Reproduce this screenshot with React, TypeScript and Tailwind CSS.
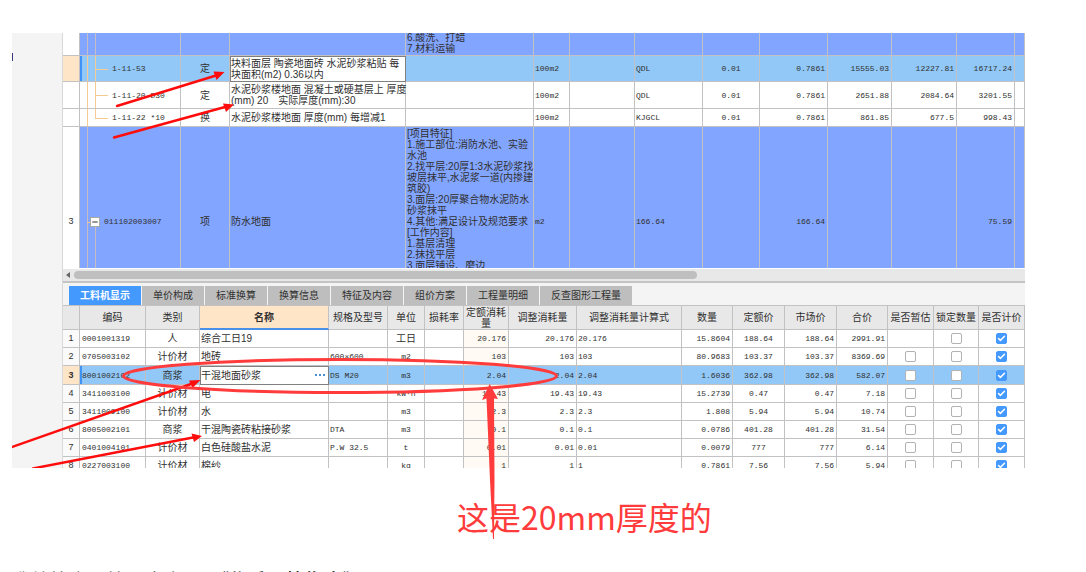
import { Fragment, type ReactNode } from "react";
import clsx from "clsx";
import { Check, Minus } from "lucide-react";

const TABS = ["工料机显示", "单价构成", "标准换算", "换算信息", "特征及内容", "组价方案", "工程量明细", "反查图形工程量"];

type QuotaRow = {
  code: string;
  kind: string;
  name: string[];
  expr: string;
  price: string;
  rate: string;
  total: string;
  height: string;
  selected?: boolean;
};

const QUOTAS: QuotaRow[] = [
  {
    code: "1-11-53",
    kind: "定",
    name: ["块料面层 陶瓷地面砖 水泥砂浆粘贴 每", "块面积(m2) 0.36以内"],
    expr: "QDL",
    price: "15555.03",
    rate: "12227.81",
    total: "16717.24",
    height: "h-[26px]",
    selected: true,
  },
  {
    code: "1-11-20 D30",
    kind: "定",
    name: ["水泥砂浆楼地面 混凝土或硬基层上 厚度", "(mm) 20　实际厚度(mm):30"],
    expr: "QDL",
    price: "2651.88",
    rate: "2084.64",
    total: "3201.55",
    height: "h-[27px]",
  },
  {
    code: "1-11-22 *10",
    kind: "换",
    name: ["水泥砂浆楼地面 厚度(mm) 每增减1"],
    expr: "KJGCL",
    price: "861.85",
    rate: "677.5",
    total: "998.43",
    height: "h-[18px]",
  },
];

const FEATURES = [
  "[项目特征]",
  "1.施工部位:消防水池、实验",
  "水池",
  "2.找平层:20厚1:3水泥砂浆找",
  "坡层抹平,水泥浆一道(内掺建",
  "筑胶)",
  "3.面层:20厚聚合物水泥防水",
  "砂浆抹平",
  "4.其他:满足设计及规范要求",
  "[工作内容]",
  "1.基层清理",
  "2.抹找平层",
  "3.面层铺设、磨边",
];

const HEADERS = [
  "", "编码", "类别", "名称", "规格及型号", "单位", "损耗率", "定额消耗量", "调整消耗量",
  "调整消耗量计算式", "数量", "定额价", "市场价", "合价", "是否暂估", "锁定数量", "是否计价",
];

// code, kind, name, spec, unit, consumption, quantity, price, total
const MATERIALS = [
  ["0001001319", "人", "综合工日19", "", "工日", "20.176", "15.8604", "188.64", "2991.91"],
  ["0705003102", "计价材", "地砖", "600×600", "m2", "103", "80.9683", "103.37", "8369.69"],
  ["8001002102", "商浆", "干混地面砂浆", "DS M20", "m3", "2.04", "1.6036", "362.98", "582.07"],
  ["3411003100", "计价材", "电", "", "kW·h", "19.43", "15.2739", "0.47", "7.18"],
  ["3411009100", "计价材", "水", "", "m3", "2.3", "1.808", "5.94", "10.74"],
  ["8005002101", "商浆", "干混陶瓷砖粘接砂浆", "DTA", "m3", "0.1", "0.0786", "401.28", "31.54"],
  ["0401004101", "计价材", "白色硅酸盐水泥", "P.W 32.5", "t", "0.01", "0.0079", "777", "6.14"],
  ["0227003100", "计价材", "棉纱", "", "kg", "1", "0.7861", "7.56", "5.94"],
];

const SELECTED = 2;

const cell = "border-r border-b border-[#c2c2c4] p-0 whitespace-nowrap";
const mono = "font-['Liberation_Mono','Noto_Sans_CJK_SC',monospace] text-[8px]";
const marker = "shadow-[inset_2px_0_0_#3f93f5]";

function Lines({ lines }: { lines: string[] }) {
  return (
    <>
      {lines.map((line, i) => (
        <Fragment key={line}>
          {i > 0 && <br />}
          {line}
        </Fragment>
      ))}
    </>
  );
}

function Tick({ label, checked }: { label: string; checked?: boolean }) {
  return (
    <label className="relative mx-auto block size-[11px]">
      <input
        type="checkbox"
        aria-label={label}
        defaultChecked={checked}
        className="peer block size-[11px] appearance-none rounded-[2px] border border-[#b2b2b2] bg-white checked:border-[#4499ff] checked:bg-[#4499ff]"
      />
      <Check
        size={9}
        strokeWidth={4}
        className="pointer-events-none absolute top-px left-px hidden text-white peer-checked:block"
      />
    </label>
  );
}

function TreeCell({ children, selected, last }: { children: ReactNode; selected?: boolean; last?: boolean }) {
  return (
    <td className={clsx(cell, mono, "relative pl-8", selected && marker)}>
      <span className="absolute inset-y-0 left-[7px] w-px bg-[#f5cb92]" />
      <span className={clsx("absolute top-0 left-[15px] w-px bg-[#f5cb92]", last ? "h-1/2" : "h-full")} />
      <span className="absolute top-1/2 left-[15px] h-px w-[13px] bg-[#f5cb92]" />
      {children}
    </td>
  );
}

function QuotaTable() {
  return (
    <div className="h-[235px] overflow-hidden">
      <table className="w-full table-fixed border-separate border-spacing-0">
        <colgroup>
          <col className="w-[17px]" />
          <col className="w-[101px]" />
          <col className="w-[49px]" />
          <col className="w-[176px]" />
          <col className="w-[128px]" />
          <col className="w-[36px]" />
          <col className="w-[65px]" />
          <col className="w-[68px]" />
          <col className="w-[57px]" />
          <col className="w-[68px]" />
          <col className="w-[64px]" />
          <col className="w-[65px]" />
          <col className="w-[58px]" />
          <col />
        </colgroup>
        <tbody>
          <tr className="h-[23px] bg-[#82a5ff]">
            <td className={clsx(cell, "bg-white")} />
            <td className={clsx(cell, "relative")}>
              <span className="absolute inset-y-0 left-[7px] w-px bg-[#c8bcc4]" />
              <span className="absolute inset-y-0 left-[15px] w-px bg-[#c8bcc4]" />
            </td>
            <td className={cell} />
            <td className={cell} />
            <td className={clsx(cell, "pl-px")}>
              <div className="flex h-[20px] flex-col justify-end">
                <p>6.酸洗、打蜡</p>
                <p>7.材料运输</p>
              </div>
            </td>
            {[...Array(9)].map((_, i) => (
              <td key={i} className={cell} />
            ))}
          </tr>
          {QUOTAS.map((row, i) => (
            <tr key={row.code} className={clsx(row.height, row.selected ? "bg-[#92c8f7]" : "bg-white")}>
              <td className={clsx(cell, row.selected && "bg-[#ffe5c8]")} />
              <TreeCell selected={row.selected} last={i === QUOTAS.length - 1}>
                {row.code}
              </TreeCell>
              <td className={clsx(cell, "text-center")}>{row.kind}</td>
              <td
                className={clsx(
                  cell,
                  "pl-px",
                  row.selected && "bg-white outline outline-1 -outline-offset-1 outline-[#808080]"
                )}
              >
                <Lines lines={row.name} />
              </td>
              <td className={cell} />
              <td className={clsx(cell, mono, "pl-px")}>100m2</td>
              <td className={cell} />
              <td className={clsx(cell, mono, "pl-px")}>{row.expr}</td>
              <td className={clsx(cell, mono, "text-center")}>0.01</td>
              <td className={clsx(cell, mono, "pr-0.5 text-right")}>0.7861</td>
              <td className={clsx(cell, mono, "pr-0.5 text-right")}>{row.price}</td>
              <td className={clsx(cell, mono, "pr-0.5 text-right")}>{row.rate}</td>
              <td className={clsx(cell, mono, "pr-0.5 text-right")}>{row.total}</td>
              <td className={cell} />
            </tr>
          ))}
          <tr className="h-[190px] bg-[#82a5ff]">
            <td className={clsx(cell, "bg-white text-center text-[9px]")}>3</td>
            <td className={clsx(cell, mono, "relative pl-6")}>
              <span className="absolute inset-y-0 left-[7px] w-px bg-[#c8bcc4]" />
              <span className="absolute top-1/2 bottom-0 left-[15px] w-px bg-[#c8bcc4]" />
              <span className="absolute top-1/2 left-[7px] h-px w-[4px] bg-[#f5cb92]" />
              <button
                aria-label="折叠"
                className="absolute top-1/2 left-[10px] flex size-[10px] -translate-y-1/2 items-center justify-center border border-[#a8a8a8] bg-white"
              >
                <Minus size={8} strokeWidth={3} />
              </button>
              011102003007
            </td>
            <td className={clsx(cell, "text-center")}>项</td>
            <td className={clsx(cell, "pl-px")}>防水地面</td>
            <td className={clsx(cell, "pt-px pl-px align-top")}>
              <Lines lines={FEATURES} />
            </td>
            <td className={clsx(cell, mono, "pl-px")}>m2</td>
            <td className={cell} />
            <td className={clsx(cell, mono, "pl-px")}>166.64</td>
            <td className={cell} />
            <td className={clsx(cell, mono, "pr-0.5 text-right")}>166.64</td>
            <td className={cell} />
            <td className={cell} />
            <td className={clsx(cell, mono, "pr-0.5 text-right")}>75.59</td>
            <td className={cell} />
          </tr>
        </tbody>
      </table>
    </div>
  );
}

function MaterialTable() {
  return (
    <div className="h-[163px] overflow-hidden border-t border-[#c2c2c4]">
      <table className="w-full table-fixed border-separate border-spacing-0">
        <colgroup>
          <col className="w-[17px]" />
          <col className="w-[66px]" />
          <col className="w-[54px]" />
          <col className="w-[129px]" />
          <col className="w-[59px]" />
          <col className="w-[37px]" />
          <col className="w-[39px]" />
          <col className="w-[45px]" />
          <col className="w-[68px]" />
          <col className="w-[105px]" />
          <col className="w-[51px]" />
          <col className="w-[52px]" />
          <col className="w-[52px]" />
          <col className="w-[51px]" />
          <col className="w-[46px]" />
          <col className="w-[45px]" />
          <col />
        </colgroup>
        <thead>
          <tr className="h-[24px]">
            {HEADERS.map((title) => (
              <th
                key={title}
                className={clsx(
                  "border-r border-b border-[#c2c2c4] p-0",
                  title === "名称"
                    ? "border-b-2 border-b-[#4a90e8] bg-[#ffe5c8] font-bold"
                    : "bg-[#e8e8e8] font-normal"
                )}
              >
                {title}
              </th>
            ))}
          </tr>
        </thead>
        <tbody>
          {MATERIALS.map(([code, kind, name, spec, unit, use, qty, price, total], i) => {
            const on = i === SELECTED;
            return (
              <tr key={code} className={on ? "h-[19px] bg-[#92c8f7]" : "h-[18px] bg-white"}>
                <td className={clsx(cell, "text-center text-[9px]", on ? "bg-[#ffe5c8] font-bold" : "bg-[#fafafa]")}>
                  {i + 1}
                </td>
                <td className={clsx(cell, mono, "pl-0.5", on && marker)}>{code}</td>
                <td className={clsx(cell, "text-center")}>{kind}</td>
                <td
                  className={clsx(cell, "px-px", on && "bg-white outline outline-1 -outline-offset-1 outline-[#808080]")}
                >
                  <div className="flex justify-between">
                    <span>{name}</span>
                    {on && (
                      <button aria-label="选择" className="flex items-center gap-0.5 pr-0.5">
                        <i className="size-[2px] bg-[#4a90d8]" />
                        <i className="size-[2px] bg-[#4a90d8]" />
                        <i className="size-[2px] bg-[#4a90d8]" />
                      </button>
                    )}
                  </div>
                </td>
                <td className={clsx(cell, mono, "pl-px")}>{spec}</td>
                <td className={clsx(cell, unit !== "工日" && mono, "text-center")}>{unit}</td>
                <td className={cell} />
                <td className={clsx(cell, mono, "pr-0.5 text-right", !on && "bg-[#fffaf4]")}>{use}</td>
                <td className={clsx(cell, mono, "pr-0.5 text-right")}>{use}</td>
                <td className={clsx(cell, mono, "pl-px")}>{use}</td>
                <td className={clsx(cell, mono, "pr-0.5 text-right")}>{qty}</td>
                <td className={clsx(cell, mono, "text-center")}>{price}</td>
                <td className={clsx(cell, mono, "pr-0.5 text-right")}>{price}</td>
                <td className={clsx(cell, mono, "pr-0.5 text-right")}>{total}</td>
                <td className={cell}>{i > 0 && <Tick label="是否暂估" />}</td>
                <td className={cell}>
                  <Tick label="锁定数量" />
                </td>
                <td className={cell}>
                  <Tick label="是否计价" checked />
                </td>
              </tr>
            );
          })}
        </tbody>
      </table>
    </div>
  );
}

// hand-drawn marks over the tables
function Marks() {
  return (
    <svg className="pointer-events-none absolute top-0 left-0" width="1086" height="572" viewBox="0 0 1086 572">
      <clipPath id="shot">
        <rect x="12" y="33" width="1013" height="435" />
      </clipPath>
      <g clipPath="url(#shot)" stroke="#ff0c0c" strokeWidth="2.4" fill="#ff0c0c" strokeLinecap="round">
        <path d="M117 106L216 75.500M114 137.500L225 107M8 448.500L191 384M33 468.500L193 437.500" />
        <g stroke="none">
          <path d="M224.500 72L213.500 71.500L216.500 80Z" />
          <path d="M234 104.500L223 103.500L226 112Z" />
          <path d="M200.500 380L189 380.500L192.500 388Z" />
          <path d="M202 436L191.500 433.500L194 442Z" />
        </g>
      </g>
      <ellipse cx="340" cy="376" rx="216.500" ry="16.500" fill="none" stroke="#ff3b3b" strokeWidth="3" />
      <path d="M489.700 384L498 399L494 398.500L494.500 480L494 539H493L490 480L486.500 398.500L482 400Z" fill="#ff3b3b" />
    </svg>
  );
}

export default function App() {
  return (
    <div className="relative h-screen overflow-hidden bg-white pt-[33px] font-['Liberation_Sans','Noto_Sans_CJK_SC',sans-serif] text-[10px] leading-[11px] text-[#303030]">
      <div className="mr-[61px] ml-3 flex">
        <aside className="w-[51px] shrink-0 border-r border-[#d8d8d8] bg-[#f4f4f4] pt-5">
          <div className="h-2 w-px bg-[#38387c]" />
        </aside>
        <main className="min-w-0 flex-1 bg-[#f4f4f4]">
          <QuotaTable />
          <div className="flex h-[15px] items-center gap-1 border-t border-b-2 border-t-white border-b-[#c4c4c4] bg-[#e8e8e8] pl-[3px]">
            <svg width="4" height="6" viewBox="0 0 4 6">
              <path d="M4 0V6L0 3Z" fill="#666" />
            </svg>
            <div className="h-2 w-[65%] rounded-full bg-[#bfbfbf]" />
          </div>
          <nav className="flex gap-px pt-[3px] pl-1.5">
            {TABS.map((tab, i) => (
              <button
                key={tab}
                className={clsx(
                  "h-[19px] px-[11px]",
                  i === 0 ? "bg-[#4499ff] font-bold text-white" : "bg-[#bebebe]"
                )}
              >
                {tab}
              </button>
            ))}
          </nav>
          <MaterialTable />
        </main>
      </div>
      <p className="mt-6 pl-[457px] text-[32px] leading-[48px] text-[#ff3b3b] font-['Noto_Sans_CJK_SC',sans-serif]">
        这是20mm厚度的
      </p>
      <p className="mt-7 flex gap-2 pl-3 font-['Noto_Sans_CJK_SC',sans-serif] text-[19px] leading-[24px] text-[#444]">
        我给算方，管理中文而
        <strong className="font-medium text-black">《优秀工算指南》</strong>
      </p>
      <Marks />
    </div>
  );
}
